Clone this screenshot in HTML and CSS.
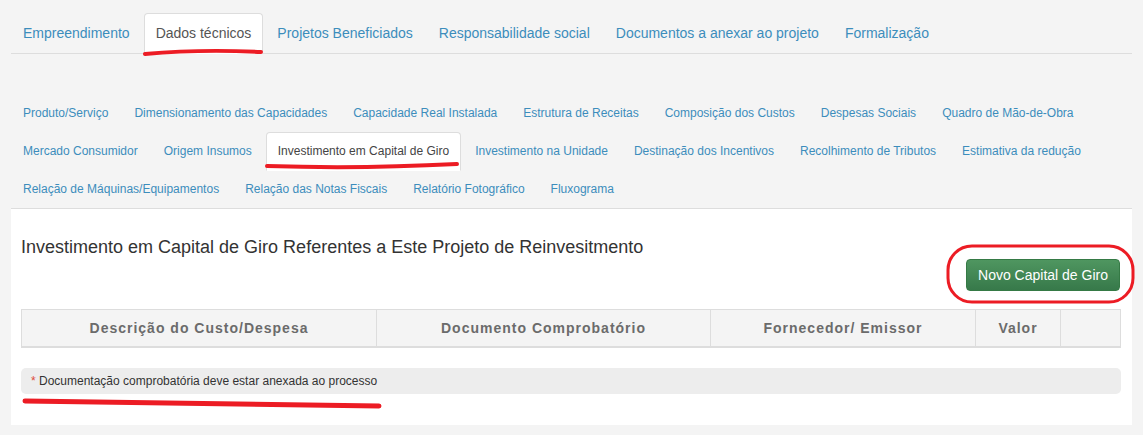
FILE: index.html
```html
<!DOCTYPE html>
<html lang="pt-BR">
<head>
    <meta charset="UTF-8">
    <title>Dados técnicos - Investimento em Capital de Giro</title>
    <link rel="stylesheet" href="styles.css">
</head>
<body>

    <div class="wrap">
        <ul class="nav-main">
            <li><a href="#">Empreendimento</a></li>
            <li class="active"><a href="#">Dados técnicos</a></li>
            <li><a href="#">Projetos Beneficiados</a></li>
            <li><a href="#">Responsabilidade social</a></li>
            <li><a href="#">Documentos a anexar ao projeto</a></li>
            <li><a href="#">Formalização</a></li>
        </ul>

        <div class="tab-body">
            <ul class="nav-sub">
                <li><a href="#">Produto/Serviço</a></li>
                <li><a href="#">Dimensionamento das Capacidades</a></li>
                <li><a href="#">Capacidade Real Instalada</a></li>
                <li><a href="#">Estrutura de Receitas</a></li>
                <li><a href="#">Composição dos Custos</a></li>
                <li><a href="#">Despesas Sociais</a></li>
                <li><a href="#">Quadro de Mão-de-Obra</a></li>
                <li><a href="#">Mercado Consumidor</a></li>
                <li><a href="#">Origem Insumos</a></li>
                <li class="active"><a href="#">Investimento em Capital de Giro</a></li>
                <li><a href="#">Investimento na Unidade</a></li>
                <li><a href="#">Destinação dos Incentivos</a></li>
                <li><a href="#">Recolhimento de Tributos</a></li>
                <li><a href="#">Estimativa da redução</a></li>
                <li><a href="#">Relação de Máquinas/Equipamentos</a></li>
                <li><a href="#">Relação das Notas Fiscais</a></li>
                <li><a href="#">Relatório Fotográfico</a></li>
                <li><a href="#">Fluxograma</a></li>
            </ul>

            <div class="pane">
                <h3 class="pane-title">Investimento em Capital de Giro Referentes a Este Projeto de Reinvesitmento</h3>
                <div class="actions">
                    <button class="btn-success" type="button">Novo Capital de Giro</button>
                </div>

                <table class="grid">
                    <colgroup>
                        <col class="col-desc">
                        <col class="col-doc">
                        <col class="col-forn">
                        <col class="col-valor">
                        <col>
                    </colgroup>
                    <thead>
                        <tr>
                            <th>Descrição do Custo/Despesa</th>
                            <th>Documento Comprobatório</th>
                            <th>Fornecedor/ Emissor</th>
                            <th>Valor</th>
                            <th></th>
                        </tr>
                    </thead>
                    <tbody></tbody>
                </table>

                <div class="note"><span class="req">*</span> Documentação comprobatória deve estar anexada ao processo</div>
            </div>
        </div>
    </div>

    <!-- marcações em vermelho feitas sobre a captura -->
    <svg class="marks" width="1143" height="435" viewBox="0 0 1143 435">
        <path d="M145 54 Q 200 49 261 52" />
        <path d="M267 166 Q 360 169 457 164" />
        <path d="M25 401 L 379 406" class="thick" />
        <rect x="948" y="246" width="185" height="56" rx="24" ry="24" class="ring" />
    </svg>

</body>
</html>
```

FILE: styles.css
```css
body {
    margin: 0;
    background: #f4f4f4;
    font-family: "Liberation Sans", Arial, sans-serif;
    color: #333;
    position: relative;
    overflow: hidden;
    height: 435px;
}

a {
    color: #3c8dbc;
    text-decoration: none;
}

.wrap {
    margin: 0 11px;
    padding-top: 13px;
}

/* abas principais */
.nav-main {
    list-style: none;
    margin: 0;
    padding: 0;
    display: flex;
    border-bottom: 1px solid #ddd;
}

.nav-main li {
    margin-right: 2px;
    margin-bottom: -1px;
}

.nav-main a {
    display: block;
    font-size: 14px;
    line-height: 19px;
    padding: 10px 11px;
    border: 1px solid transparent;
    border-radius: 4px 4px 0 0;
}

.nav-main .active a {
    background: #fff;
    color: #555;
    border-color: #ddd #ddd transparent;
}

.tab-body {
    padding-top: 40px;
}

/* sub abas */
.nav-sub {
    list-style: none;
    margin: 0;
    padding: 0;
    display: flex;
    flex-wrap: wrap;
    border-bottom: 1px solid #ddd;
}

.nav-sub li {
    margin-right: 2px;
    margin-bottom: -1px;
}

.nav-sub a {
    display: block;
    font-size: 12px;
    line-height: 17px;
    padding: 10px 11px;
    border: 1px solid transparent;
    border-radius: 4px 4px 0 0;
}

.nav-sub .active a {
    background: #fff;
    color: #444;
    border-color: #ddd #ddd transparent;
}

/* conteudo */
.pane {
    background: #fff;
    padding: 28px 11px 31px 10px;
}

.pane-title {
    margin: 0;
    font-size: 18px;
    font-weight: normal;
    line-height: 20px;
    color: #333;
}

.actions {
    display: flex;
    justify-content: flex-end;
    margin-top: 2px;
    padding-right: 1px;
}

.btn-success {
    font-family: "Liberation Sans", Arial, sans-serif;
    font-size: 14px;
    line-height: 20px;
    color: #fff;
    padding: 5px 11px;
    border: 1px solid #357a45;
    border-radius: 4px;
    background: linear-gradient(#4f9660, #37794a);
    cursor: pointer;
    height: 32px;
}

.grid {
    width: 100%;
    margin-top: 18px;
    border-collapse: collapse;
    table-layout: fixed;
}

.grid th {
    box-sizing: border-box;
    background: #f4f4f4;
    border: 1px solid #ddd;
    border-bottom-width: 2px;
    padding: 8px 4px;
    font-size: 14px;
    line-height: 20px;
    letter-spacing: 1px;
    color: #6b6b6b;
    text-align: center;
    white-space: nowrap;
}

.col-desc { width: 355px; }
.col-doc { width: 334px; }
.col-forn { width: 265px; }
.col-valor { width: 85px; }

.note {
    margin-top: 20px;
    background: #ededed;
    border-radius: 5px;
    padding: 5px 10px;
    font-size: 12px;
    line-height: 16px;
    color: #333;
}

.req {
    color: #dd4b39;
}

/* marcações */
.marks {
    position: absolute;
    top: 0;
    left: 0;
    pointer-events: none;
}

.marks path {
    fill: none;
    stroke: #ec1c24;
    stroke-width: 4;
    stroke-linecap: round;
}

.marks .thick {
    stroke-width: 5;
}

.marks .ring {
    fill: none;
    stroke: #ec1c24;
    stroke-width: 3;
}
```
